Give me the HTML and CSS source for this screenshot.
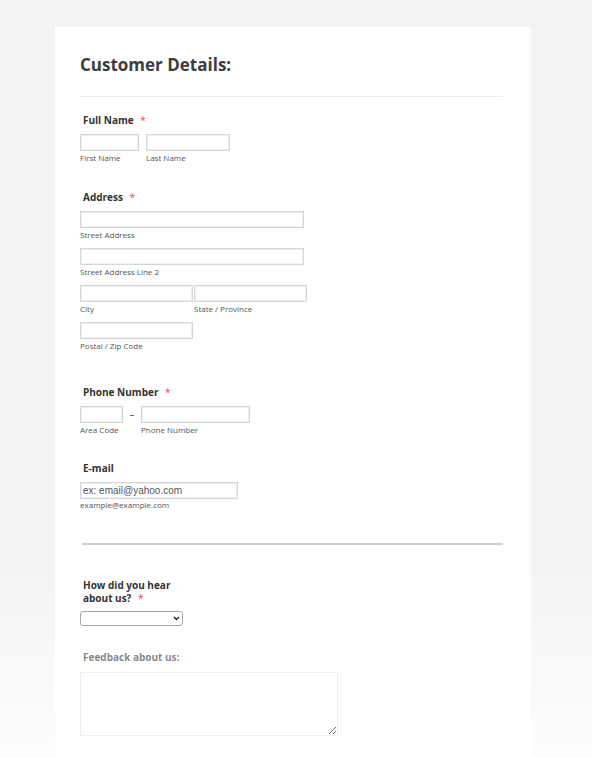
FILE: index.html
```html
<!DOCTYPE html>
<html lang="en">
<head>
    <meta charset="UTF-8">
    <meta name="viewport" content="width=device-width, initial-scale=1.0">
    <title>Customer Details</title>
    <link rel="stylesheet" href="styles.css">
</head>
<body>

    <div class="form-card">
        <h1 class="form-title">Customer Details:</h1>
        <hr class="title-rule">

        <div class="field field-name">
            <label class="field-label">Full Name <span class="req">*</span></label>
            <div class="row">
                <div class="sub"><input type="text" class="box w-first"><span class="sub-label">First Name</span></div>
                <div class="sub"><input type="text" class="box w-last"><span class="sub-label">Last Name</span></div>
            </div>
        </div>

        <div class="field field-address">
            <label class="field-label">Address <span class="req">*</span></label>
            <div class="rows">
                <div class="sub"><input type="text" class="box w-street"><span class="sub-label">Street Address</span></div>
                <div class="sub"><input type="text" class="box w-street"><span class="sub-label">Street Address Line 2</span></div>
                <div class="row tight">
                    <div class="sub"><input type="text" class="box w-city"><span class="sub-label">City</span></div>
                    <div class="sub"><input type="text" class="box w-city"><span class="sub-label">State / Province</span></div>
                </div>
                <div class="sub"><input type="text" class="box w-city"><span class="sub-label">Postal / Zip Code</span></div>
            </div>
        </div>

        <div class="field field-phone">
            <label class="field-label">Phone Number <span class="req">*</span></label>
            <div class="row phone-row">
                <div class="sub"><input type="text" class="box w-area"><span class="sub-label">Area Code</span></div>
                <span class="dash">&ndash;</span>
                <div class="sub"><input type="text" class="box w-phone"><span class="sub-label">Phone Number</span></div>
            </div>
        </div>

        <div class="field field-email">
            <label class="field-label">E-mail</label>
            <div class="sub">
                <input type="email" class="box w-email" placeholder="ex: email@yahoo.com">
                <span class="sub-label email-sub">example@example.com</span>
            </div>
        </div>

        <hr class="divider">

        <div class="field field-source">
            <label class="field-label narrow"><span>How did you hear</span><br><span>about us?</span> <span class="req">*</span></label>
            <div class="select-wrap">
                <select class="source-select">
                    <option></option>
                    <option>Friend</option>
                    <option>Search engine</option>
                    <option>Advertisement</option>
                </select>
                <!-- small chevron, the native one is too big -->
                <svg class="chevron" width="7" height="5" viewBox="0 0 7 5">
                    <path d="M1 1 L3.5 3.5 L6 1" fill="none" stroke="#222" stroke-width="1.4"/>
                </svg>
            </div>
        </div>

        <div class="field field-feedback">
            <label class="field-label muted">Feedback about us:</label>
            <textarea class="feedback"></textarea>
        </div>
    </div>

</body>
</html>
```

FILE: styles.css
```css
html {
    min-height: 100%;
}
body {
    margin: 0;
    padding: 0;
    min-height: 758px;
    font-family: 'Open Sans', sans-serif;
    color: #333;
    background: linear-gradient(to bottom, #f3f3f3 0, #f3f3f3 560px, #fdfdfd 758px);
}
.form-card {
    background-color: #ffffff;
    margin: 27px 0 0 55px;
    width: 476px;
    box-sizing: border-box;
    padding: 27px 28px 40px 25px;
    min-height: 760px;
}
.form-title {
    margin: 0;
    font-size: 17px;
    line-height: 22px;
    font-weight: bold;
    color: #3d3d3d;
}
.title-rule {
    margin: 20px 0 0;
    border: none;
    border-top: 1px solid #ececec;
    height: 0;
}
.field-label {
    display: block;
    padding-left: 3px;
    font-size: 10px;
    line-height: 12px;
    font-weight: bold;
    color: #333;
    margin-bottom: 8px;
}
.field-label.narrow {
    width: 100px;
    line-height: 13px;
    margin-bottom: 6px;
}
.field-label.muted {
    color: #8a8a8a;
    margin-bottom: 9px;
}
.req {
    color: #ee4444;
    font-weight: normal;
    margin-left: 4px;
}
.field-name { margin-top: 17px; }
.field-address { margin-top: 28px; }
.field-phone { margin-top: 35px; }
.field-email { margin-top: 27px; }
.field-source { margin-top: 34px; }
.field-feedback { margin-top: 25px; }

.row {
    display: flex;
    gap: 7px;
}
.row.tight {
    gap: 1px;
}
.rows {
    display: flex;
    flex-direction: column;
    gap: 8px;
}
.sub {
    display: flex;
    flex-direction: column;
}
.box {
    margin: 0;
    height: 17px;
    box-sizing: border-box;
    border: 1px solid #d6d6d6;
    box-shadow: inset 0 0 0 1px #f0f0f0;
    padding: 0 2px;
    font-family: 'Liberation Sans', sans-serif;
    font-size: 10px;
    background: #fff;
    outline: none;
}
.box::placeholder {
    color: #555;
}
.w-first { width: 59px; }
.w-last { width: 84px; }
.w-street { width: 224px; }
.w-city { width: 113px; }
.w-area { width: 43px; }
.w-phone { width: 109px; }
.w-email { width: 158px; }
.sub-label {
    margin-top: 2px;
    font-size: 8px;
    line-height: 10px;
    color: #555;
}
.email-sub {
    margin-top: 1px;
}
.phone-row {
    gap: 0;
}
.dash {
    width: 18px;
    text-align: center;
    font-size: 10px;
    line-height: 17px;
    color: #555;
}
.divider {
    margin: 33px 0 0 2px;
    border: none;
    border-top: 2px solid #cfcfcf;
    height: 0;
}
.select-wrap {
    position: relative;
    width: 103px;
}
.source-select {
    display: block;
    width: 103px;
    height: 15px;
    margin: 0;
    padding: 0 2px;
    border: 1px solid #a8a8a8;
    border-radius: 3px;
    font-size: 9px;
    background: #fff;
    appearance: none;
    -webkit-appearance: none;
}
.chevron {
    position: absolute;
    right: 3px;
    top: 5px;
    pointer-events: none;
}
.feedback {
    display: block;
    width: 258px;
    height: 64px;
    margin: 0;
    box-sizing: border-box;
    border: 1px solid #eeeeee;
    font-family: 'Open Sans', sans-serif;
}
```
